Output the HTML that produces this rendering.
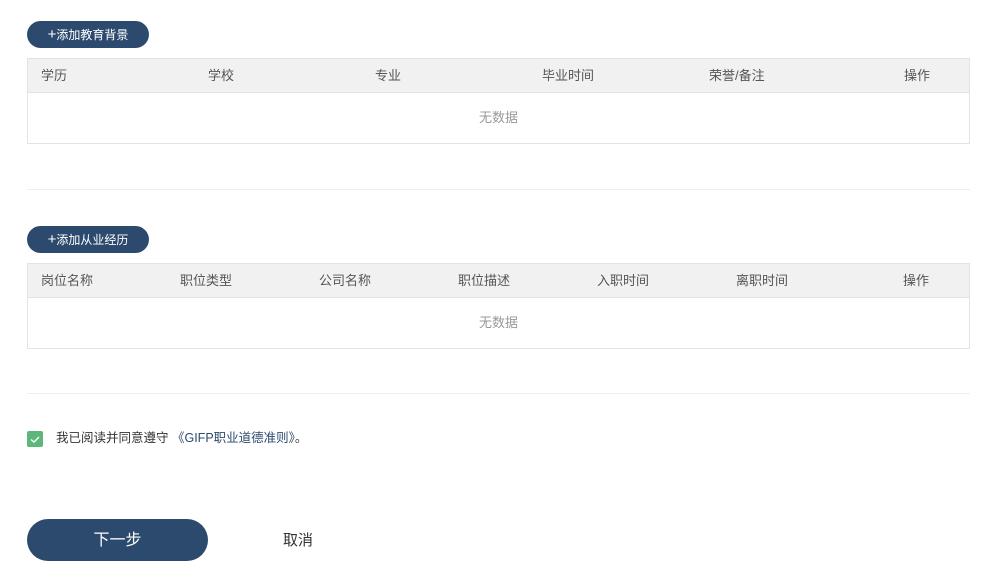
<!DOCTYPE html>
<html><head><meta charset="utf-8"><style>
*{margin:0;padding:0;box-sizing:border-box}
body{width:1004px;height:579px;background:#fff;position:relative;font-family:"Liberation Sans","Noto Sans CJK SC",sans-serif;overflow:hidden}
.abs{position:absolute}
.btn{position:absolute;left:27px;width:122px;height:27px;border-radius:14px;background:#2c4a6e;color:#fff;font-size:12px;line-height:27px;text-align:center}
.tbl{position:absolute;left:27px;width:943px;border:1px solid #e3e3e3}
.hd{height:34px;background:#f1f1f1;border-bottom:1px solid #e3e3e3;position:relative}
.hd span{position:absolute;top:0;line-height:33px;font-size:13px;color:#555}
.bd{height:50px;line-height:50px;text-align:center;font-size:13px;color:#999}
.hr{position:absolute;left:27px;width:943px;height:1px;background:#eee}
</style></head><body>
<div class="btn" style="top:21px"><span style="font-size:15px">+</span>添加教育背景</div>
<div class="tbl" style="top:58px">
<div class="hd"><span style="left:13px">学历</span><span style="left:180px">学校</span><span style="left:347px">专业</span><span style="left:514px">毕业时间</span><span style="left:681px">荣誉/备注</span><span style="left:876px">操作</span></div>
<div class="bd">无数据</div></div>
<div class="hr" style="top:189px"></div>
<div class="btn" style="top:226px"><span style="font-size:15px">+</span>添加从业经历</div>
<div class="tbl" style="top:263px">
<div class="hd"><span style="left:13px">岗位名称</span><span style="left:152px">职位类型</span><span style="left:291px">公司名称</span><span style="left:430px">职位描述</span><span style="left:569px">入职时间</span><span style="left:708px">离职时间</span><span style="left:875px">操作</span></div>
<div class="bd">无数据</div></div>
<div class="hr" style="top:393px"></div>
<div class="abs" style="left:27px;top:431px;width:16px;height:16px;background:#5cb77a;border-radius:2px">
<svg width="16" height="16"><path d="M4 8.5l3 2.5 5-5" stroke="#fff" stroke-width="1.4" fill="none"/></svg></div>
<div class="abs" style="left:56px;top:429px;font-size:12.5px;line-height:18px;color:#333;white-space:nowrap">我已阅读并同意遵守 <span style="color:#2c4a6e">《GIFP职业道德准则》</span>。</div>
<div class="abs" style="left:27px;top:519px;width:181px;height:42px;border-radius:21px;background:#2c4a6e;color:#fff;font-size:16px;line-height:44px;text-align:center">下一步</div>
<div class="abs" style="left:283px;top:531px;font-size:15px;line-height:20px;color:#333">取消</div>
</body></html>
